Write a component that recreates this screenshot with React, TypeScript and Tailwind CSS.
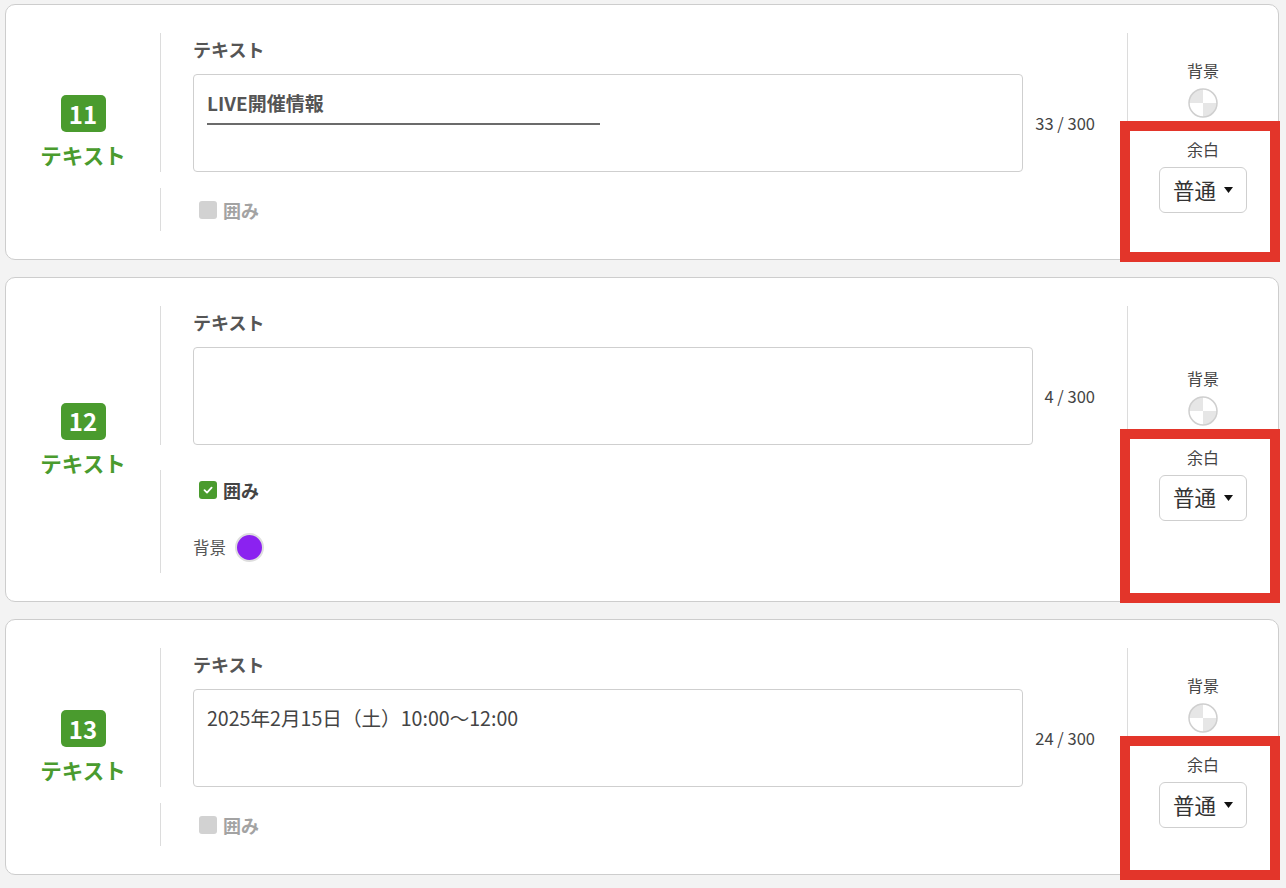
import React from "react";

interface Block {
    no: number;
    count: string;
    checked: boolean;
    content: React.ReactNode;
    rowGap: string;
    redBottom: string;
}

const blocks: Block[] = [
    {
        no: 11,
        count: "33 / 300",
        checked: false,
        rowGap: "mt-4",
        redBottom: "-bottom-[49px]",
        content: (
            <div className="w-[393px] border-b-2 border-[#6b6b6b] pb-[8px] text-[19px] font-bold leading-6 text-[#555]">
                LIVE開催情報
            </div>
        ),
    },
    {
        no: 12,
        count: "4 / 300",
        checked: true,
        rowGap: "mt-[25px]",
        redBottom: "-bottom-[82px]",
        content: null,
    },
    {
        no: 13,
        count: "24 / 300",
        checked: false,
        rowGap: "mt-4",
        redBottom: "-bottom-[52px]",
        content: (
            <div className="text-[19.6px] leading-6 text-[#444]">2025年2月15日（土）10:00〜12:00</div>
        ),
    },
];

const QuarterCircle = () => (
    <svg width="30" height="30" viewBox="0 0 30 30">
        <path d="M15 15 L15 1 A14 14 0 0 0 1 15 Z" fill="#e6e6e6" />
        <path d="M15 15 L15 29 A14 14 0 0 0 29 15 Z" fill="#e6e6e6" />
        <circle cx="15" cy="15" r="14" fill="none" stroke="#cfcfcf" strokeWidth="1.5" />
    </svg>
);

const Checkbox = ({checked}: { checked: boolean }) => (
    <div className="ml-[6px] flex h-6 items-center gap-[6px]">
        {checked ? (
            <span className="flex h-[18px] w-[18px] items-center justify-center rounded-[3px] bg-[#4a9b2e]">
                <svg width="12" height="12" viewBox="0 0 12 12">
                    <path d="M2.5 6.2 L5 8.6 L9.6 3.6" fill="none" stroke="#fff" strokeWidth="1.8"
                          strokeLinecap="round" strokeLinejoin="round" />
                </svg>
            </span>
        ) : (
            <span className="h-[18px] w-[18px] rounded-[3px] bg-[#d2d2d2]" />
        )}
        <span className={`text-[18px] font-bold ${checked ? "text-[#444]" : "text-[#a3a3a3]"}`}>囲み</span>
    </div>
);

const BlockCard = ({block}: { block: Block }) => (
    <section className="flex rounded-[10px] border border-[#cdcdcd] bg-white py-7">
        <div className="flex w-[154px] flex-col items-center justify-center">
            <span
                className="flex h-[37px] w-[45px] items-center justify-center rounded-[5px] bg-[#4a9b2e] text-[24px] font-bold leading-none text-white">
                {block.no}
            </span>
            <span className="mt-[9px] text-[21.5px] font-bold leading-7 text-[#4a9b2e]">テキスト</span>
        </div>

        <div className="flex flex-1 flex-col">
            <div className="border-l border-[#dcdcdc] px-8 pt-1">
                <div className="h-6 text-[18px] font-bold leading-6 text-[#555]">テキスト</div>
                <div className="mt-[13px] flex items-center gap-3">
                    <div className="h-[98px] flex-1 rounded-[4px] border border-[#cfcfcf] px-[13px] pt-[16px]">
                        {block.content}
                    </div>
                    <span className="text-[16.5px] text-[#444]">{block.count}</span>
                </div>
            </div>
            <div className={`border-l border-[#dcdcdc] px-8 ${block.rowGap} ${block.checked ? "pt-2 pb-[11px]" : "pt-[10px] pb-[9px]"}`}>
                <Checkbox checked={block.checked} />
                {block.checked && (
                    <div className="mt-[31px] flex h-[29px] items-center gap-[9px]">
                        <span className="text-[16.5px] text-[#555]">背景</span>
                        <span className="h-[29px] w-[29px] rounded-full border-2 border-[#dedede] bg-[#8b22f0]" />
                    </div>
                )}
            </div>
        </div>

        <div className="flex w-[151px] flex-col items-center justify-center border-l border-[#dcdcdc] pt-2">
            <span className="text-[16px] leading-[22px] text-[#444]">背景</span>
            <div className="mt-[7px]">
                <QuarterCircle />
            </div>
            <div className="relative mt-5 flex flex-col items-center self-stretch">
                <span className="text-[16px] leading-[22px] text-[#444]">余白</span>
                <div
                    className="mt-[7px] flex h-[46px] w-[88px] items-center justify-center gap-[8px] rounded-[6px] border border-[#cfcfcf] bg-white">
                    <span className="text-[21.5px] text-[#333]">普通</span>
                    <svg width="9" height="6" viewBox="0 0 9 6">
                        <path d="M0 0 L9 0 L4.5 6 Z" fill="#111" />
                    </svg>
                </div>
                <div
                    className={`pointer-events-none absolute -top-[17px] -left-[8px] -right-[2px] ${block.redBottom} border-[10px] border-[#e3352a]`} />
            </div>
        </div>
    </section>
);

export default function App() {
    return (
        <main
            className="flex min-h-screen flex-col gap-[17px] bg-[#f3f3f3] pt-1 pl-[5px] pr-[7px] pb-4 font-['Noto_Sans_CJK_JP','Noto_Sans',sans-serif]">
            {blocks.map((block) => (
                <BlockCard key={block.no} block={block} />
            ))}
        </main>
    );
}
